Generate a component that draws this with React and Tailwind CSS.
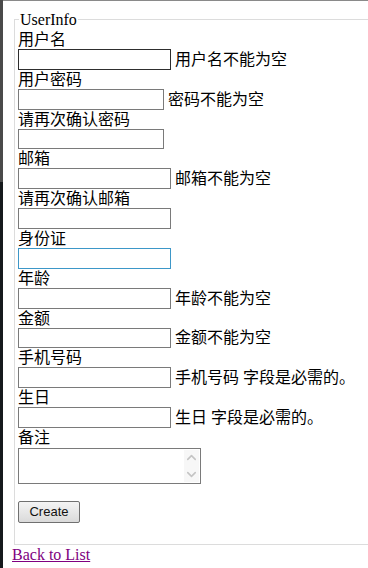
import React from "react";
import { ChevronUp, ChevronDown } from "lucide-react";

const fields = [
  { label: "用户名", w: "w-[153px]", msg: "用户名不能为空", border: "border-[#2e2e2e]" },
  { label: "用户密码", w: "w-[146px]", msg: "密码不能为空", type: "password" },
  { label: "请再次确认密码", w: "w-[146px]", type: "password" },
  { label: "邮箱", w: "w-[153px]", msg: "邮箱不能为空" },
  { label: "请再次确认邮箱", w: "w-[153px]" },
  { label: "身份证", w: "w-[153px]", border: "border-[#3d97c8]" },
  { label: "年龄", w: "w-[153px]", msg: "年龄不能为空" },
  { label: "金额", w: "w-[153px]", msg: "金额不能为空" },
  { label: "手机号码", w: "w-[153px]", msg: "手机号码 字段是必需的。" },
  { label: "生日", w: "w-[153px]", msg: "生日 字段是必需的。" },
];

const Field = ({ label, w, msg, type = "text", border = "border-[#7a7a7a]" }) => (
  <div>
    <div className="h-[19px] leading-[19px]">{label}</div>
    <div className="flex h-[20.8px] items-center">
      <input type={type} className={`${w} h-[20.8px] border ${border} bg-white outline-none`} />
      {msg && <span className="ml-[4px] whitespace-nowrap leading-[19px]">{msg}</span>}
    </div>
  </div>
);

const App = () => {
  return (
    <div
      className="flex min-h-[568px] w-[368px] overflow-hidden bg-white text-[16px] text-black"
      style={{ fontFamily: '"Liberation Serif", "Noto Sans CJK SC", serif' }}
    >
      <div className="flex w-[3px] shrink-0 flex-col">
        <div className="h-[182px] bg-[#4a4a4a]"></div>
        <div className="flex-1 bg-[#15191c]"></div>
      </div>
      <div className="flex-1 border-t border-[#8a8a8a] pl-[9px]">
        <fieldset className="mt-[9px] ml-[2px] border border-r-0 border-[#dcdcdc] pb-[21px] pl-[3px] pt-[1px]">
          <legend className="ml-[1px] px-[1px] leading-[19px]">UserInfo</legend>
          {fields.map((f) => (
            <Field key={f.label} {...f} />
          ))}
          <div className="h-[19px] leading-[19px]">备注</div>
          <div className="relative mt-[1px] h-[36px] w-[183px]">
            <textarea className="h-full w-full resize-none overflow-hidden border border-[#7a7a7a] outline-none"></textarea>
            <div className="absolute right-[2px] top-[2px] flex h-[32px] w-[15px] flex-col items-center justify-between bg-[#f7f7f7] text-[#c4c4c4]">
              <ChevronUp size={15} strokeWidth={2.5} />
              <ChevronDown size={15} strokeWidth={2.5} />
            </div>
          </div>
          <button
            className="mt-[17px] h-[22px] w-[62px] rounded-[2px] border border-[#707070] bg-gradient-to-b from-[#f4f4f4] to-[#dadada] text-[13px] text-[#111]"
            style={{ fontFamily: '"Liberation Sans", Arial, sans-serif' }}
          >
            Create
          </button>
        </fieldset>
        <a href="#" className="block leading-[19px] text-[#800080] underline">
          Back to List
        </a>
      </div>
    </div>
  );
};

export default App;
